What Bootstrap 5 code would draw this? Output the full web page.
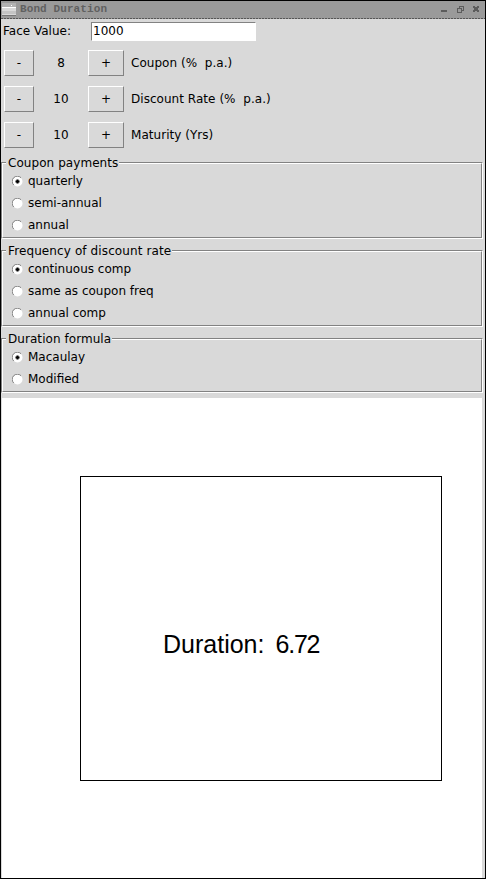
<!DOCTYPE html>
<html lang="en">
<head>
<meta charset="utf-8">
<title>Bond Duration</title>
<link href="https://cdn.jsdelivr.net/npm/bootstrap@5.3.0/dist/css/bootstrap.min.css" rel="stylesheet">
<style>
body{margin:0;overflow:hidden;background:#d9d9d9;font:12px/22px "DejaVu Sans",sans-serif;color:#000}
.win{width:486px;height:879px;border:1px solid #000;background:#d9d9d9}
.titlebar{height:17px;background:#9a9a9a;flex:none;padding-right:5px}
.titlebar svg{flex:none;display:block}
.title-text{font:bold 11px/16px "Liberation Mono",monospace;color:#606060;letter-spacing:.1px;margin-left:3px}
.face{height:26px;padding-left:2px;padding-top:2px;flex:none}
.face label{width:88px;line-height:20px}
.face input{width:165px;height:19px;margin-top:1px;padding:0 0 1px 1px;border:1px solid;border-color:#828282 #fff #fff #828282;border-bottom-style:dotted;border-radius:0;background:#fff;font:12px/16px "DejaVu Sans",sans-serif;color:#000;outline:0}
.stepper{height:36px;padding-left:3px;flex:none}
.stepper .btn{height:26px;padding:0;border:1px solid;border-color:#fff #828282 #828282 #fff;border-radius:0;font-size:12px;line-height:24px;color:#000;box-shadow:none}
.minus{width:30px}.plus{width:36px}
.num{width:54px;text-align:center}
.stepper .caption{margin-left:7px;white-space:pre;letter-spacing:.04px}
.group{position:relative;width:482px;border:1px solid;border-color:#828282 #fff #fff #828282;margin-bottom:11px;flex:none}
.group.first{margin-top:9px}
.group-in{border:1px solid;border-color:#fff #828282 #828282 #fff;padding:6px 0 0 9px;height:75px}
.group.short .group-in{height:53px}
.group .name{position:absolute;left:4px;top:-9px;line-height:18px;background:#d9d9d9;padding:0 1px 0 2px;white-space:nowrap;letter-spacing:.06px}
.name.wide{letter-spacing:.11px}
.choice{height:22px}
.choice svg{margin-right:5px;flex:none}
.plot{width:480px;height:480px;margin-left:1px;margin-top:-6px;background:#fff;padding:78px 0 0 78px;flex:none}
.frame{width:362px;height:305px;border:1px solid #000}
.result{font:25px/30px "Liberation Sans",sans-serif;margin:152px 0 0 82px}
.result .value{margin-left:11px;letter-spacing:-1.2px}
</style>
<script src="https://cdn.jsdelivr.net/npm/bootstrap@5.3.0/dist/js/bootstrap.bundle.min.js"></script>
</head>
<body>
<svg width="0" height="0" class="position-absolute">
<symbol id="off" viewBox="0 0 11 11"><circle cx="5.5" cy="5.5" r="5" fill="#fff"/><path d="M1.7 9A5 5 0 0 1 9 1.7" fill="none" stroke="#828282"/></symbol>
<symbol id="on" viewBox="0 0 11 11"><use href="#off"/><path d="M4 3h2v1h1v2h-1v1h-2v-1h-1v-2h1z" transform="translate(.5 .5)"/></symbol>
</svg>
<main class="win d-flex flex-column">
<header class="titlebar d-flex align-items-start">
<svg width="16" height="17" shape-rendering="crispEdges"><path fill="#d9d9d9" d="M1 2h14v13H1z"/><path fill="#b2b2b2" d="M1 2h14v4H1z"/><path fill="#fff" d="M1 6h14v1H1zM5 6h2v1H5zM10 4h1v1h-1z"/><path fill="#c4c4c4" d="M1 10h14v3H1z"/><path fill="#777" d="M1 14h14v1H1z"/></svg>
<span class="title-text">Bond Duration</span>
<svg class="ms-auto" width="40" height="17" shape-rendering="crispEdges" fill="#5c5c5c"><path d="M1 9h6v2H1z"/><path fill-rule="evenodd" d="M19 5h5v5h-2v2h-5v-5h2zM20 6v1h2v2h1v-3zM18 8v3h3v-3z"/><path d="M33 5h2v1h2v-1h2v2h-1v2h1v2h-2v-1h-2v1h-2v-2h1v-2h-1z"/></svg>
</header>
<svg class="d-block flex-shrink-0" width="484" height="1"><path d="M0 .5h484" stroke="#999"/><path d="M0 .5h484" stroke="#555" stroke-dasharray="2 1"/></svg>
<div class="face d-flex"><label for="fv">Face Value:</label><input id="fv" value="1000"></div>
<div class="stepper d-flex align-items-center"><button class="btn minus">-</button><span class="num">8</span><button class="btn plus">+</button><span class="caption">Coupon (%  p.a.)</span></div>
<div class="stepper d-flex align-items-center"><button class="btn minus">-</button><span class="num">10</span><button class="btn plus">+</button><span class="caption">Discount Rate (%  p.a.)</span></div>
<div class="stepper d-flex align-items-center"><button class="btn minus">-</button><span class="num">10</span><button class="btn plus">+</button><span class="caption">Maturity (Yrs)</span></div>
<section class="group first"><div class="name">Coupon payments</div><div class="group-in">
<div class="choice d-flex align-items-center"><svg width="11" height="11"><use href="#on"/></svg>quarterly</div>
<div class="choice d-flex align-items-center"><svg width="11" height="11"><use href="#off"/></svg>semi-annual</div>
<div class="choice d-flex align-items-center"><svg width="11" height="11"><use href="#off"/></svg>annual</div>
</div></section>
<section class="group"><div class="name wide">Frequency of discount rate</div><div class="group-in">
<div class="choice d-flex align-items-center"><svg width="11" height="11"><use href="#on"/></svg>continuous comp</div>
<div class="choice d-flex align-items-center"><svg width="11" height="11"><use href="#off"/></svg>same as coupon freq</div>
<div class="choice d-flex align-items-center"><svg width="11" height="11"><use href="#off"/></svg>annual comp</div>
</div></section>
<section class="group short"><div class="name">Duration formula</div><div class="group-in">
<div class="choice d-flex align-items-center"><svg width="11" height="11"><use href="#on"/></svg>Macaulay</div>
<div class="choice d-flex align-items-center"><svg width="11" height="11"><use href="#off"/></svg>Modified</div>
</div></section>
<section class="plot"><div class="frame"><div class="result">Duration:<span class="value">6.72</span></div></div></section>
</main>
</body>
</html>
